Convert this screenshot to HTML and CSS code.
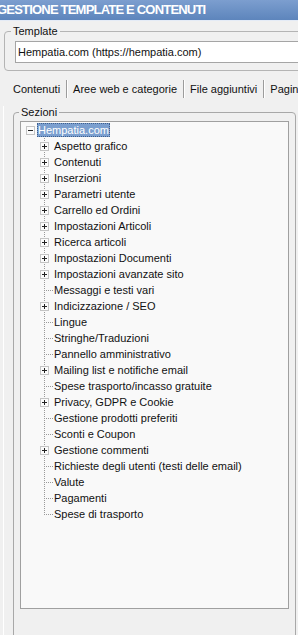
FILE: index.html
```html
<!DOCTYPE html>
<html lang="it">
<head>
    <meta charset="UTF-8">
    <meta name="viewport" content="width=device-width, initial-scale=1.0">
    <title>Gestione template e contenuti</title>
    <link rel="stylesheet" href="styles.css">
</head>
<body>
    <div class="titlebar">GESTIONE TEMPLATE E CONTENUTI</div>

    <fieldset class="group template-group">
        <legend>Template</legend>
        <div class="textbox">Hempatia.com (https://hempatia.com)</div>
    </fieldset>

    <div class="tabs">
        <span class="tab active">Contenuti</span>
        <span class="tab">Aree web e categorie</span>
        <span class="tab">File aggiuntivi</span>
        <span class="tab">Pagine</span>
    </div>

    <div class="tab-panel">
        <fieldset class="group sections">
            <legend>Sezioni</legend>
            <div class="tree">
                <div class="root"><span class="toggle minus"></span><span class="label selected">Hempatia.com</span></div>
                <ul class="children">
                    <li><span class="toggle plus"></span><span class="label">Aspetto grafico</span></li>
                    <li><span class="toggle plus"></span><span class="label">Contenuti</span></li>
                    <li><span class="toggle plus"></span><span class="label">Inserzioni</span></li>
                    <li><span class="toggle plus"></span><span class="label">Parametri utente</span></li>
                    <li><span class="toggle plus"></span><span class="label">Carrello ed Ordini</span></li>
                    <li><span class="toggle plus"></span><span class="label">Impostazioni Articoli</span></li>
                    <li><span class="toggle plus"></span><span class="label">Ricerca articoli</span></li>
                    <li><span class="toggle plus"></span><span class="label">Impostazioni Documenti</span></li>
                    <li><span class="toggle plus"></span><span class="label">Impostazioni avanzate sito</span></li>
                    <li><span class="joint"></span><span class="label">Messaggi e testi vari</span></li>
                    <li><span class="toggle plus"></span><span class="label">Indicizzazione / SEO</span></li>
                    <li><span class="joint"></span><span class="label">Lingue</span></li>
                    <li><span class="joint"></span><span class="label">Stringhe/Traduzioni</span></li>
                    <li><span class="joint"></span><span class="label">Pannello amministrativo</span></li>
                    <li><span class="toggle plus"></span><span class="label">Mailing list e notifiche email</span></li>
                    <li><span class="joint"></span><span class="label">Spese trasporto/incasso gratuite</span></li>
                    <li><span class="toggle plus"></span><span class="label">Privacy, GDPR e Cookie</span></li>
                    <li><span class="joint"></span><span class="label">Gestione prodotti preferiti</span></li>
                    <li><span class="joint"></span><span class="label">Sconti e Coupon</span></li>
                    <li><span class="toggle plus"></span><span class="label">Gestione commenti</span></li>
                    <li><span class="joint"></span><span class="label">Richieste degli utenti (testi delle email)</span></li>
                    <li><span class="joint"></span><span class="label">Valute</span></li>
                    <li><span class="joint"></span><span class="label">Pagamenti</span></li>
                    <li><span class="joint"></span><span class="label">Spese di trasporto</span></li>
                </ul>
            </div>
        </fieldset>
    </div>
</body>
</html>
```

FILE: styles.css
```css
*{
    box-sizing: border-box;
}
html, body{
    margin: 0;
    padding: 0;
}
body{
    width: 298px;
    height: 635px;
    overflow: hidden;
    background: #f0f0f0;
    font-family: "Liberation Sans", Arial, sans-serif;
    font-size: 11px;
    color: #111;
}

/* window title */
.titlebar{
    height: 21px;
    line-height: 20px;
    background: linear-gradient(#7c9ecf, #5d85bc);
    border-bottom: 1px solid #e4ebf6;
    color: #fff;
    font-size: 13px;
    font-weight: bold;
    letter-spacing: -0.8px;
    text-indent: -3px;
    white-space: nowrap;
}

/* group boxes */
.group{
    margin: 0;
    min-width: 0;
    border: 1px solid #b4b4b4;
    border-radius: 4px;
}
.group legend{
    padding: 0 2px;
    line-height: 13px;
}
.template-group{
    margin: 4px 0 0 4px;
    width: 320px;
    padding: 3px 0 7px 10px;
}
.template-group legend{
    margin-left: -4px;
}
.textbox{
    height: 22px;
    line-height: 21px;
    padding: 0 2px;
    border: 1px solid #a5a5a5;
    background: #fff;
    white-space: nowrap;
}

/* tabs */
.tabs{
    display: flex;
    height: 18px;
    margin-top: 9px;
    padding-left: 7px;
    white-space: nowrap;
}
.tab{
    flex-shrink: 0;
    padding: 0 6px;
    line-height: 18px;
    border-right: 1px solid #9c9c9c;
    box-shadow: 1px 0 0 #fff;
}
.tab:last-child{
    border-right: 0;
    box-shadow: none;
}

.tab-panel{
    margin: 4px 0 0 3px;
    border-left: 1px solid #fff;
}
.sections{
    margin: 8px 0 0 9px;
    width: 283px;
    padding: 2px 6px 40px 6px;
    border-color: #a8a8a8;
}
.sections legend{
    margin-left: -1px;
}

/* tree view */
.tree{
    height: 488px;
    border: 1px solid #a0a0a0;
    background: #f9f9f9;
}
.root, .children li{
    display: flex;
    align-items: center;
    height: 16px;
    white-space: nowrap;
}
.root{
    padding-left: 5px;
}
.children{
    list-style: none;
    margin: 0;
    padding: 0;
}
.children li{
    padding-left: 19px;
    background: repeating-linear-gradient(to bottom, #9a9a9a 0 1px, transparent 1px 2px) 23px 0 / 1px 100% no-repeat;
}
.children li:last-child{
    background-size: 1px 8px;
}

.toggle{
    flex-shrink: 0;
    width: 9px;
    height: 9px;
    border: 1px solid #c4c4c4;
    background-color: #fbfbfb;
    background-repeat: no-repeat;
    background-position: center;
}
.minus{
    background-image: linear-gradient(#222, #222);
    background-size: 5px 1px;
}
.plus{
    background-image: linear-gradient(#222, #222), linear-gradient(#222, #222);
    background-size: 5px 1px, 1px 5px;
}
.joint{
    flex-shrink: 0;
    width: 13px;
    height: 1px;
    margin-right: -4px;
    background: repeating-linear-gradient(to right, #9a9a9a 0 1px, transparent 1px 2px) 4px 0 / 9px 1px no-repeat;
}
.children .label{
    margin-left: 5px;
}
.root .label{
    margin-left: 2px;
    line-height: 12px;
}
.selected{
    background: #7b9fcf;
    border: 1px dotted #3f5f8c;
    color: #fff;
}
```
